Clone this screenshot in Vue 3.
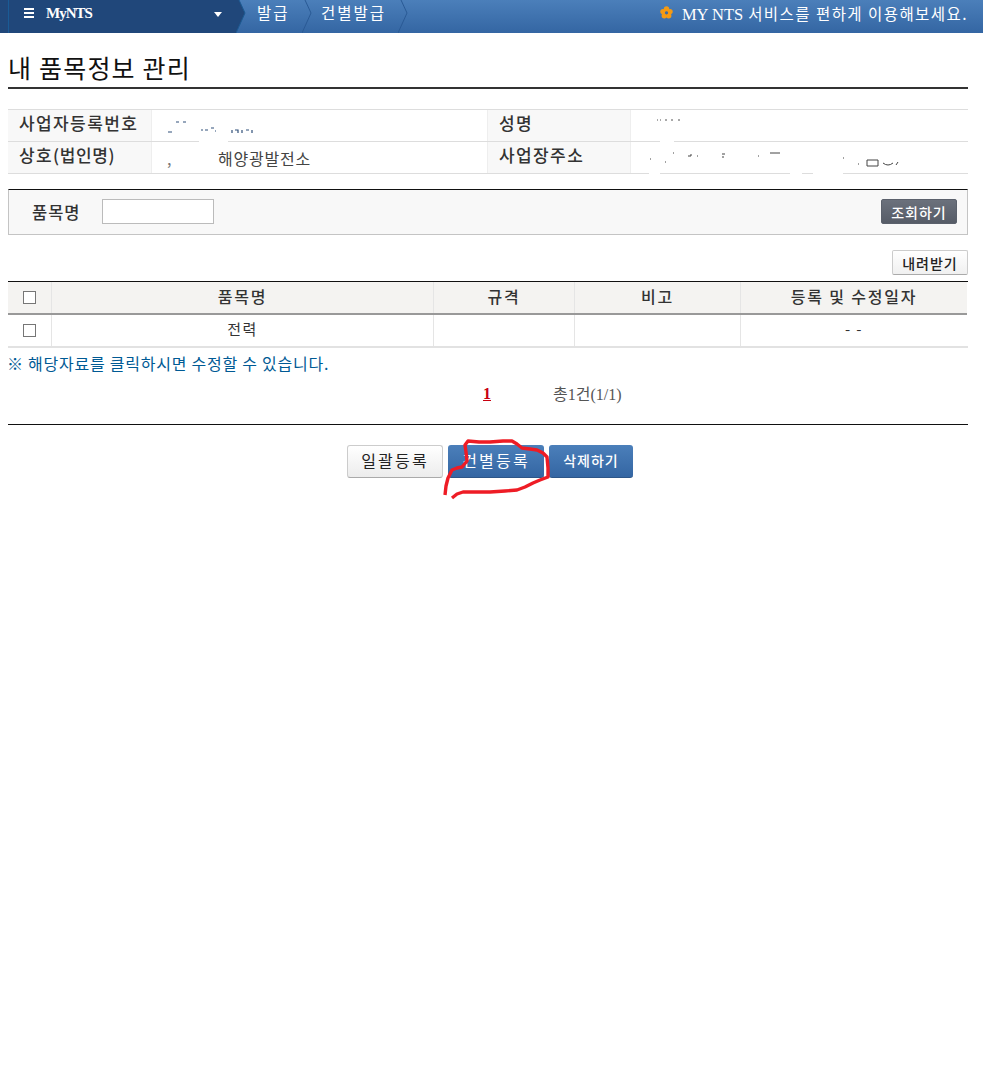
<script setup>
const columns = [
  { label: '품목명', width: 382 },
  { label: '규격', width: 141 },
  { label: '비고', width: 166 },
  { label: '등록 및 수정일자', width: 226 }
]

// 가려진 부분 (지운 자국)
const patches = [
  { left: 191, top: 30, width: 29, height: 5 },
  { left: 652, top: 30, width: 14, height: 5 },
  { left: 641, top: 62, width: 11, height: 4 },
  { left: 782, top: 62, width: 12, height: 4 },
  { left: 805, top: 62, width: 30, height: 4 }
]

const scribble = 'M445 495 L446 486 L448 478 L452 470 L457 468 L462 467 L467 461 L466 452 L465 445 L468 441 L479 442 L490 442 L503 441 L512 441 L517 444 L522 448 L530 449 L537 450 L543 453 L547 457 L548 468 L548 477 L540 480 L533 483 L525 487 L517 490 L505 491 L490 492 L476 492 L463 492 L457 494 L452 498'
</script>

<template>
  <div class="page">
    <header class="topbar">
      <div class="menu">
        <div class="menu-left">
          <span class="burger"><i></i><i></i><i></i></span>
          <span class="brand">MyNTS</span>
        </div>
        <span class="caret"></span>
        <svg class="menu-tip" width="10" height="33" viewBox="0 0 10 33">
          <path d="M0 0 L3 0 L9 13 L0 33 Z" fill="#20477a" />
          <path d="M3 0 L9 13 L0 33" fill="none" stroke="#1d5a92" />
        </svg>
      </div>
      <div class="crumb crumb-first">
        <span>발급</span>
        <svg width="10" height="33" viewBox="0 0 10 33"><path d="M3 0 L9 13 L0 33" fill="none" stroke="#2a5a95" /></svg>
      </div>
      <div class="crumb crumb-second">
        <span>건별발급</span>
        <svg width="10" height="33" viewBox="0 0 10 33"><path d="M3 0 L9 13 L0 33" fill="none" stroke="#2a5a95" /></svg>
      </div>
      <div class="welcome">
        <svg class="flower" width="13" height="13" viewBox="0 0 13 13">
          <circle cx="6.5" cy="3" r="2.7" fill="#f59a12" />
          <circle cx="10" cy="5.6" r="2.7" fill="#f59a12" />
          <circle cx="8.7" cy="9.8" r="2.7" fill="#f59a12" />
          <circle cx="4.3" cy="9.8" r="2.7" fill="#f59a12" />
          <circle cx="3" cy="5.6" r="2.7" fill="#f59a12" />
          <circle cx="6.5" cy="6.8" r="1.6" fill="#3b6aa5" />
        </svg>
        <span class="welcome-text"><b>MY NTS</b> 서비스를 편하게 이용해보세요.</span>
      </div>
    </header>

    <main class="content">
      <h1 class="title">내 품목정보 관리</h1>

      <div class="info">
        <div class="info-row">
          <div class="info-label first">사업자등록번호</div>
          <div class="info-value first">
            <svg width="100" height="18" viewBox="0 0 100 18">
              <path d="M1 14h4M9 4h3M16 4h3M34 12h2M38 12h3M44 10h3M48 13h1M65 12v3M68 12h3v3M75 12v3M79 12h3M85 12v3" fill="none" stroke="#30507a" stroke-width="1.2" />
            </svg>
          </div>
          <div class="info-label second">성명</div>
          <div class="info-value">
            <svg width="40" height="12" viewBox="0 0 40 12" class="up">
              <path d="M11 10h1M14 10h1M19 10h2M25 10h2M32 10h2" stroke="#555" stroke-width="1" />
            </svg>
          </div>
        </div>
        <div class="info-row">
          <div class="info-label first">상호<span class="paren">(법인명)</span></div>
          <div class="info-value first company">
            <span class="dot">,</span>
            <span>해양광발전소</span>
          </div>
          <div class="info-label second">사업장주소</div>
          <div class="info-value">
            <svg width="260" height="22" viewBox="0 0 260 22">
              <path d="M4 9h1M19 12h1M27 3h1M42 6h3v-2M51 6h1M76 4h3M76 7h2M112 6h1M124 3h10M197 8h1M212 14h1M221 10h11v6h-11zM237 13q5 4 10 0M252 12l-2 3" fill="none" stroke="#444" stroke-width="1" />
            </svg>
          </div>
        </div>
        <span
          v-for="(p, i) in patches"
          :key="i"
          class="patch"
          :style="{ left: p.left + 'px', top: p.top + 'px', width: p.width + 'px', height: p.height + 'px' }"
        ></span>
      </div>

      <div class="search">
        <label class="search-label">품목명</label>
        <input class="search-input" type="text" />
        <button class="btn-dark">조회하기</button>
      </div>

      <div class="tools">
        <button class="btn-small">내려받기</button>
      </div>

      <div class="grid">
        <div class="grid-head">
          <div class="cell check"><span class="box"></span></div>
          <div
            v-for="col in columns"
            :key="col.label"
            class="cell head-cell"
            :style="{ width: col.width + 'px' }"
          >{{ col.label }}</div>
        </div>
        <div class="grid-row">
          <div class="cell check"><span class="box"></span></div>
          <div class="cell" :style="{ width: columns[0].width + 'px' }">전력</div>
          <div class="cell" :style="{ width: columns[1].width + 'px' }"></div>
          <div class="cell" :style="{ width: columns[2].width + 'px' }"></div>
          <div class="cell" :style="{ width: columns[3].width + 'px' }">- -</div>
        </div>
      </div>

      <p class="note">※ 해당자료를 클릭하시면 수정할 수 있습니다.</p>

      <div class="paging">
        <a class="page-no">1</a>
        <span class="page-total">총1건(1/1)</span>
      </div>

      <div class="actions">
        <button class="btn btn-light">일괄등록</button>
        <button class="btn btn-blue">건별등록</button>
        <button class="btn btn-blue btn-bold">삭제하기</button>
      </div>
    </main>

    <svg class="scribble" width="983" height="520" viewBox="0 0 983 520">
      <path :d="scribble" fill="none" stroke="#ee1c25" stroke-width="3.4" stroke-linejoin="round" />
    </svg>
  </div>
</template>

<style scoped>
.page {
  position: relative;
  width: 983px;
  height: 1065px;
  background: #fff;
  overflow: hidden;
  font-family: "Noto Sans CJK KR", "Liberation Sans", sans-serif;
  color: #333;
}

.topbar {
  display: flex;
  height: 33px;
  background: linear-gradient(#4b7fba, #3466a3);
  color: #fff;
}

.menu {
  position: relative;
  display: flex;
  align-items: center;
  justify-content: space-between;
  width: 236px;
  height: 33px;
  padding: 0 14px 0 8px;
  box-sizing: border-box;
  background: #20477a;
}

.menu-left {
  display: flex;
  align-items: center;
  height: 33px;
  padding-left: 15px;
  border-left: 1px solid #1a5b96;
}

.burger {
  display: flex;
  flex-direction: column;
  gap: 2px;
  width: 10px;
  margin: -8px 12px 0 0;
}

.burger i {
  display: block;
  height: 2px;
  background: #fff;
}

.brand {
  margin-top: -6px;
  font-family: "Liberation Serif", serif;
  font-size: 15px;
  font-weight: bold;
  letter-spacing: -1px;
}

.caret {
  width: 0;
  height: 0;
  margin-top: -5px;
  border-left: 4px solid transparent;
  border-right: 4px solid transparent;
  border-top: 5px solid #fff;
}

.menu-tip {
  position: absolute;
  left: 236px;
  top: 0;
}

.crumb {
  display: flex;
  justify-content: space-between;
  box-sizing: border-box;
  height: 33px;
  font-size: 15.5px;
  letter-spacing: 2px;
  line-height: 24px;
}

.crumb-first {
  width: 76px;
  padding-left: 21px;
}

.crumb-second {
  width: 96px;
  padding-left: 9px;
}

.welcome {
  display: flex;
  align-items: flex-start;
  margin-left: auto;
  padding: 0 15px 0 0;
}

.flower {
  margin: 6px 9px 0 0;
}

.welcome-text {
  font-size: 15.5px;
  letter-spacing: 1.45px;
  line-height: 26px;
}

.welcome-text b {
  font-family: "Liberation Serif", serif;
  font-size: 16.5px;
  font-weight: normal;
  letter-spacing: 0;
}

.content {
  padding: 0 15px 0 8px;
}

.title {
  height: 54px;
  margin: 0;
  border-bottom: 2px solid #333;
  box-sizing: content-box;
  font-size: 25px;
  font-weight: 400;
  letter-spacing: 1.2px;
  line-height: 69px;
  color: #111;
}

.info {
  position: relative;
  margin-top: 20px;
  border-top: 1px solid #ddd;
}

.info-row {
  display: flex;
  height: 32px;
  box-sizing: border-box;
  border-bottom: 1px solid #ddd;
}

.info-label {
  box-sizing: border-box;
  width: 144px;
  padding-left: 11px;
  border-right: 1px solid #eee;
  background: #f8f8f8;
  font-size: 17px;
  font-weight: 500;
  letter-spacing: 1.4px;
  line-height: 26px;
}

.info-label.second {
  padding-left: 11px;
  border-left: 1px solid #eee;
}

.paren {
  letter-spacing: 0.6px;
}

.info-value {
  flex: 1;
  box-sizing: border-box;
  padding-left: 15px;
  font-size: 15px;
  line-height: 32px;
  overflow: hidden;
}

.info-value.first {
  flex: 0 0 335px;
}

.info-value svg {
  display: block;
  margin-top: 8px;
}

.info-value .up {
  margin-top: 0;
}

.company {
  display: flex;
  font-size: 16px;
  letter-spacing: 0.8px;
  color: #444;
}

.dot {
  width: 51px;
  color: #777;
}

.patch {
  position: absolute;
  background: #fff;
}

.search {
  display: flex;
  align-items: center;
  height: 46px;
  margin-top: 15px;
  padding: 0 10px 1px 23px;
  box-sizing: border-box;
  border: 1px solid #c4c4c4;
  border-top-color: #111;
  background: #f8f8f8;
}

.search-label {
  width: 70px;
  font-size: 16.5px;
  font-weight: 500;
  letter-spacing: 1px;
}

.search-input {
  width: 112px;
  height: 25px;
  padding: 0;
  box-sizing: border-box;
  border: 1px solid #bbb;
  background: #fff;
}

.btn-dark {
  width: 76px;
  height: 25px;
  margin-left: auto;
  padding: 0;
  border: 1px solid #5b616c;
  border-radius: 2px;
  background: linear-gradient(#6b717c, #565c67);
  color: #fff;
  font-family: inherit;
  font-size: 14px;
  font-weight: 500;
  letter-spacing: 1px;
}

.tools {
  display: flex;
  justify-content: flex-end;
  margin-top: 15px;
}

.btn-small {
  width: 76px;
  height: 25px;
  padding: 0;
  border: 1px solid #ccc;
  border-bottom-color: #aaa;
  border-radius: 2px;
  background: linear-gradient(#fff, #f0f0f0);
  color: #222;
  font-family: inherit;
  font-size: 14px;
  font-weight: 500;
  letter-spacing: 1px;
}

.grid {
  width: 960px;
  margin-top: 6px;
  border-top: 1px solid #111;
}

.grid-head,
.grid-row {
  display: flex;
  box-sizing: border-box;
  height: 33px;
}

.grid-head {
  width: 959px;
  border-bottom: 2px solid #999;
  background: #f4f3f1;
}

.grid-row {
  border-bottom: 2px solid #e2e2e2;
}

.cell {
  display: flex;
  align-items: center;
  justify-content: center;
  box-sizing: border-box;
  border-right: 1px solid #e5e5e5;
  font-size: 15px;
  letter-spacing: 1.4px;
  padding-bottom: 4px;
}

.cell:last-child {
  border-right: 0;
}

.head-cell {
  font-weight: 500;
  font-size: 16px;
  letter-spacing: 1.8px;
}

.check {
  width: 44px;
  flex: none;
  padding-bottom: 0;
}

.box {
  width: 13px;
  height: 13px;
  box-sizing: border-box;
  border: 1px solid #767676;
  background: #fff;
}

.note {
  margin: 4px 0 0 -1px;
  color: #005a94;
  font-size: 16px;
  letter-spacing: 0.75px;
  line-height: 22px;
}

.paging {
  display: flex;
  align-items: center;
  height: 22px;
  margin-top: 8px;
  padding-bottom: 20px;
  border-bottom: 1px solid #111;
  padding-left: 475px;
  font-family: "Liberation Serif", "Noto Sans CJK KR", serif;
}

.page-no {
  width: 70px;
  margin-top: 2px;
  color: #c8000f;
  font-size: 16px;
  font-weight: bold;
  text-decoration: underline;
}

.page-total {
  color: #555;
  font-size: 16px;
}

.actions {
  display: flex;
  justify-content: center;
  gap: 5px;
  margin-top: 20px;
  padding-left: 4px;
}

.btn {
  width: 96px;
  height: 33px;
  padding: 0 0 3px;
  border-radius: 3px;
  font-family: inherit;
  font-size: 16px;
  letter-spacing: 2.2px;
}

.btn-light {
  border: 1px solid #ccc;
  border-bottom-color: #aaa;
  background: linear-gradient(#fff, #ececec);
  color: #222;
  font-weight: 400;
}

.btn-blue {
  border: 0;
  border-bottom: 1px solid #2d5688;
  background: linear-gradient(#4b7fba, #3466a3);
  color: #fff;
}

.btn-bold {
  width: 84px;
  font-size: 14px;
  font-weight: 500;
  letter-spacing: 1px;
}

.scribble {
  position: absolute;
  left: 0;
  top: 0;
  pointer-events: none;
}
</style>
